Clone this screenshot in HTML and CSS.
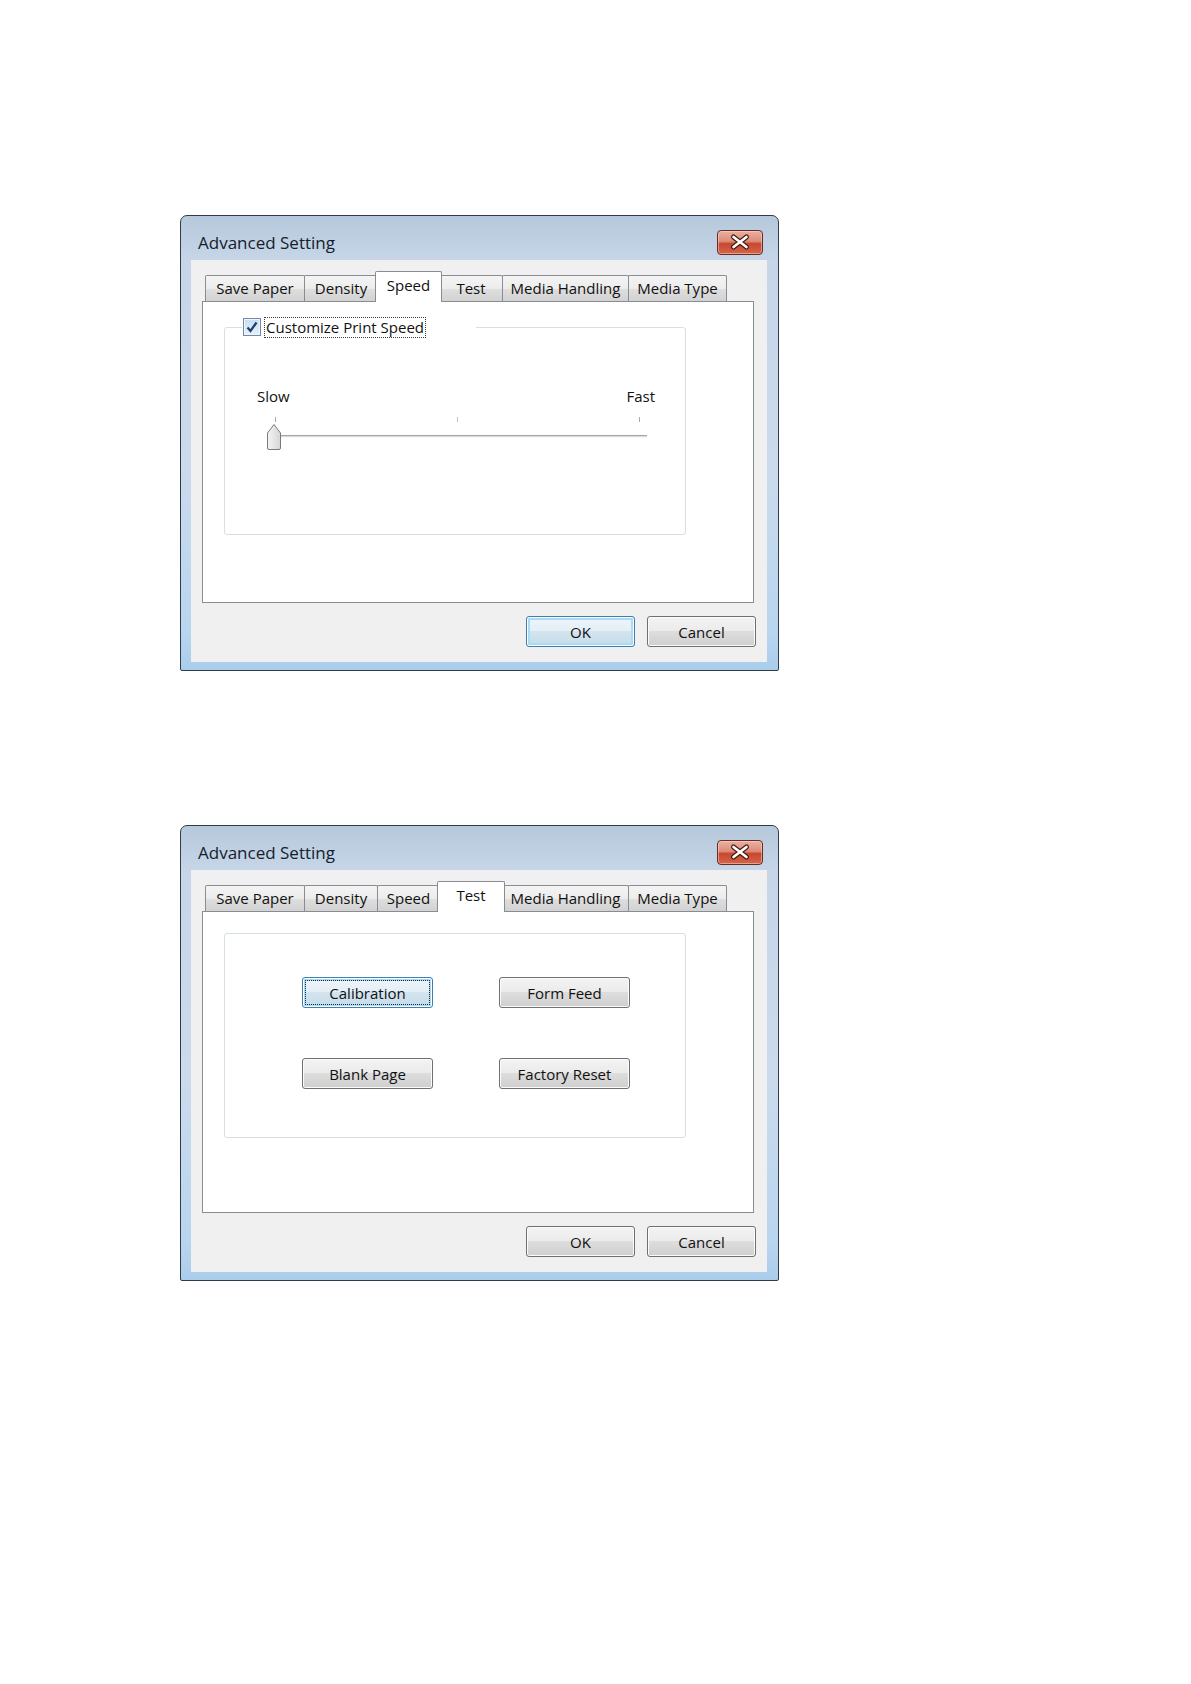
FILE: index.html
```html
<!DOCTYPE html>
<html>
<head>
    <title>Advanced Setting</title>
    <link rel="stylesheet" href="styles.css">
</head>
<body>
    <div class="page">
        <!-- speed tab -->
        <div class="dialog">
            <div class="titlebar">
                <span class="title">Advanced Setting</span>
                <span class="close">
                    <svg width="46" height="25" viewBox="0 0 46 25">
                        <path d="M16.5 7 L29.5 17 M29.5 7 L16.5 17" stroke="#4a1a12" stroke-width="5" stroke-linecap="round"/>
                        <path d="M16.5 7 L29.5 17 M29.5 7 L16.5 17" stroke="#ffffff" stroke-width="2.6" stroke-linecap="round"/>
                    </svg>
                </span>
            </div>
            <div class="client">
                <div class="tabs">
                    <span class="tab tab-save">Save Paper</span>
                    <span class="tab tab-density">Density</span>
                    <span class="tab tab-speed tab-active">Speed</span>
                    <span class="tab tab-test">Test</span>
                    <span class="tab tab-handling">Media Handling</span>
                    <span class="tab tab-type">Media Type</span>
                </div>
                <div class="panel">
                    <fieldset class="group">
                        <legend class="group-title">
                            <span class="checkbox">
                                <svg width="16" height="16" viewBox="0 0 16 16">
                                    <path d="M3.5 8.5 L6.5 12 L12.5 3.5" fill="none" stroke="#1d3d6b" stroke-width="2.2"/>
                                </svg>
                            </span><span class="focus-label">Customize Print Speed</span>
                        </legend>
                        <div class="slider">
                            <div class="scale">
                                <span>Slow</span>
                                <span>Fast</span>
                            </div>
                            <div class="ticks">
                                <span class="tick"></span>
                                <span class="tick tick-mid"></span>
                                <span class="tick"></span>
                            </div>
                            <div class="track">
                                <svg class="thumb" width="16" height="28" viewBox="0 0 16 28">
                                    <defs>
                                        <linearGradient id="thumbFill" x1="0" y1="0" x2="1" y2="0">
                                            <stop offset="0" stop-color="#f4f4f4"/>
                                            <stop offset="1" stop-color="#d6d6d6"/>
                                        </linearGradient>
                                    </defs>
                                    <path d="M1.5 10 L8 1.5 L14.5 10 V25 Q14.5 26.5 13 26.5 H3 Q1.5 26.5 1.5 25 Z" fill="url(#thumbFill)" stroke="#7a7a7a"/>
                                </svg>
                            </div>
                        </div>
                    </fieldset>
                </div>
                <div class="footer">
                    <button class="btn btn-default">OK</button>
                    <button class="btn">Cancel</button>
                </div>
            </div>
        </div>

        <!-- test tab -->
        <div class="dialog">
            <div class="titlebar">
                <span class="title">Advanced Setting</span>
                <span class="close">
                    <svg width="46" height="25" viewBox="0 0 46 25">
                        <path d="M16.5 7 L29.5 17 M29.5 7 L16.5 17" stroke="#4a1a12" stroke-width="5" stroke-linecap="round"/>
                        <path d="M16.5 7 L29.5 17 M29.5 7 L16.5 17" stroke="#ffffff" stroke-width="2.6" stroke-linecap="round"/>
                    </svg>
                </span>
            </div>
            <div class="client">
                <div class="tabs">
                    <span class="tab tab-save">Save Paper</span>
                    <span class="tab tab-density">Density</span>
                    <span class="tab tab-speed">Speed</span>
                    <span class="tab tab-test tab-active">Test</span>
                    <span class="tab tab-handling">Media Handling</span>
                    <span class="tab tab-type">Media Type</span>
                </div>
                <div class="panel">
                    <fieldset class="group group-plain">
                        <div class="test-grid">
                            <button class="btn btn-wide btn-default btn-focus">Calibration</button>
                            <button class="btn btn-wide">Form Feed</button>
                            <button class="btn btn-wide">Blank Page</button>
                            <button class="btn btn-wide">Factory Reset</button>
                        </div>
                    </fieldset>
                </div>
                <div class="footer">
                    <button class="btn">OK</button>
                    <button class="btn">Cancel</button>
                </div>
            </div>
        </div>
    </div>
</body>
</html>
```

FILE: styles.css
```css
/* windows 7 dialog look */
:root {
    --tab-border: #898c95;
    --group-border: #d5dfe5;
    --client-bg: #f0f0f0;
    --text: #111111;
}

* {
    box-sizing: border-box;
}

body {
    margin: 0;
    background: #ffffff;
    font-family: "Open Sans", "Noto Sans", sans-serif;
    font-size: 15px;
    color: var(--text);
}

.page {
    display: flex;
    flex-direction: column;
    align-items: flex-start;
    gap: 154px;
    padding: 215px 0 0 180px;
}

/* window frame */
.dialog {
    display: flex;
    flex-direction: column;
    width: 599px;
    height: 456px;
    padding: 0 11px 8px 10px;
    border: 1px solid #2f3b48;
    border-radius: 7px 7px 2px 2px;
    background: linear-gradient(to bottom, #b6c8db 0, #c6d6e8 44px, #cbdbec 55%, #b9d5ef 92%, #a9cdeb 100%);
}

.titlebar {
    display: flex;
    justify-content: space-between;
    align-items: flex-start;
    height: 44px;
    padding: 14px 4px 0 7px;
}

.title {
    font-size: 17px;
    line-height: 25px;
    color: #16202b;
}

.close {
    display: block;
    width: 46px;
    height: 25px;
    border: 1px solid #6a2a20;
    border-radius: 4px;
    background: linear-gradient(to bottom, #eab0a2 0, #dc8b78 45%, #c8472f 55%, #d3654b 100%);
    box-shadow: inset 0 0 0 1px rgba(255, 220, 210, 0.5);
    overflow: hidden;
}

.close svg {
    display: block;
    margin: -1px;
}

.client {
    display: flex;
    flex-direction: column;
    flex: 1;
    padding: 11px 11px 15px 11px;
    background: var(--client-bg);
}

/* tab strip, widths as the tab control sizes them */
.tabs {
    display: flex;
    align-items: flex-end;
    padding-left: 3px;
}

.tab {
    width: var(--w);
    height: 26px;
    margin-right: -1px;
    border: 1px solid var(--tab-border);
    border-bottom: 0;
    border-radius: 2px 2px 0 0;
    background: linear-gradient(to bottom, #f4f4f4 0, #ececec 50%, #dfdfdf 50%, #d2d2d2 100%);
    line-height: 24px;
    text-align: center;
    white-space: nowrap;
}

.tab-save { --w: 100px; }
.tab-density { --w: 74px; }
.tab-speed { --w: 63px; }
.tab-test { --w: 64px; }
.tab-handling { --w: 127px; }
.tab-type { --w: 99px; }

.tab-active {
    position: relative;
    z-index: 1;
    width: calc(var(--w) + 4px);
    height: 31px;
    margin: 0 -3px -1px -2px;
    background: #ffffff;
    line-height: 26px;
}

.panel {
    height: 302px;
    margin-right: 2px;
    padding: 15px 0 0 21px;
    border: 1px solid var(--tab-border);
    background: #ffffff;
}

/* group box */
.group {
    width: 462px;
    margin: 0;
    padding: 0;
    border: 1px solid var(--group-border);
    border-radius: 3px;
}

.group-plain {
    margin-top: 6px;
}

.group-title {
    width: 234px;
    height: 21px;
    margin-left: 17px;
    padding: 0;
    line-height: 19px;
    white-space: nowrap;
}

.checkbox {
    display: inline-block;
    vertical-align: top;
    width: 18px;
    height: 18px;
    margin: 1px 3px 0 1px;
    border: 1px solid #7189a6;
    background: linear-gradient(to bottom, #c9def3, #e6f0fa);
    box-shadow: inset 0 0 0 1px #eef5fc;
}

.checkbox svg {
    display: block;
}

.focus-label {
    display: inline-block;
    vertical-align: top;
    padding: 0 1px;
    border: 1px dotted #3a3a3a;
}

/* speed slider */
.slider {
    height: 196px;
    padding-top: 48px;
}

.scale {
    display: flex;
    justify-content: space-between;
    margin: 0 30px 0 32px;
    line-height: 20px;
}

.ticks {
    display: flex;
    justify-content: space-between;
    width: 365px;
    margin: 11px 0 0 50px;
}

.tick {
    width: 1px;
    height: 5px;
    background: #a9a9a9;
}

.tick-mid {
    background: #c4c4c4;
}

.track {
    position: relative;
    width: 379px;
    height: 3px;
    margin: 13px 0 0 43px;
    border-top: 1px solid #a4a4a4;
    border-bottom: 1px solid #f7f7f7;
    background: #dcdcdc;
}

.thumb {
    position: absolute;
    left: -2px;
    top: -13px;
}

/* test buttons */
.test-grid {
    display: grid;
    grid-template-columns: 131px 131px;
    column-gap: 66px;
    row-gap: 50px;
    padding: 43px 0 48px 77px;
}

/* push buttons */
.footer {
    display: flex;
    justify-content: flex-end;
    gap: 12px;
    margin-top: 13px;
}

.btn {
    width: 109px;
    height: 31px;
    padding: 0;
    border: 1px solid #707070;
    border-radius: 3px;
    background: linear-gradient(to bottom, #f3f3f3 0, #ebebeb 49%, #dddddd 50%, #cfcfcf 100%);
    box-shadow: inset 0 0 0 1px #fbfbfb;
    font-family: inherit;
    font-size: 15px;
    color: var(--text);
}

.btn-wide {
    width: 131px;
}

.btn-default {
    border-color: #3c7fb1;
    background: linear-gradient(to bottom, #eef6fb 0, #e3eef6 49%, #d3e4ef 50%, #c6dbe9 100%);
    box-shadow: inset 0 0 0 1px #ffffff, inset 0 0 0 3px #a8dcf5;
}

.btn-focus {
    outline: 1px dotted #2a2a2a;
    outline-offset: -4px;
}
```
